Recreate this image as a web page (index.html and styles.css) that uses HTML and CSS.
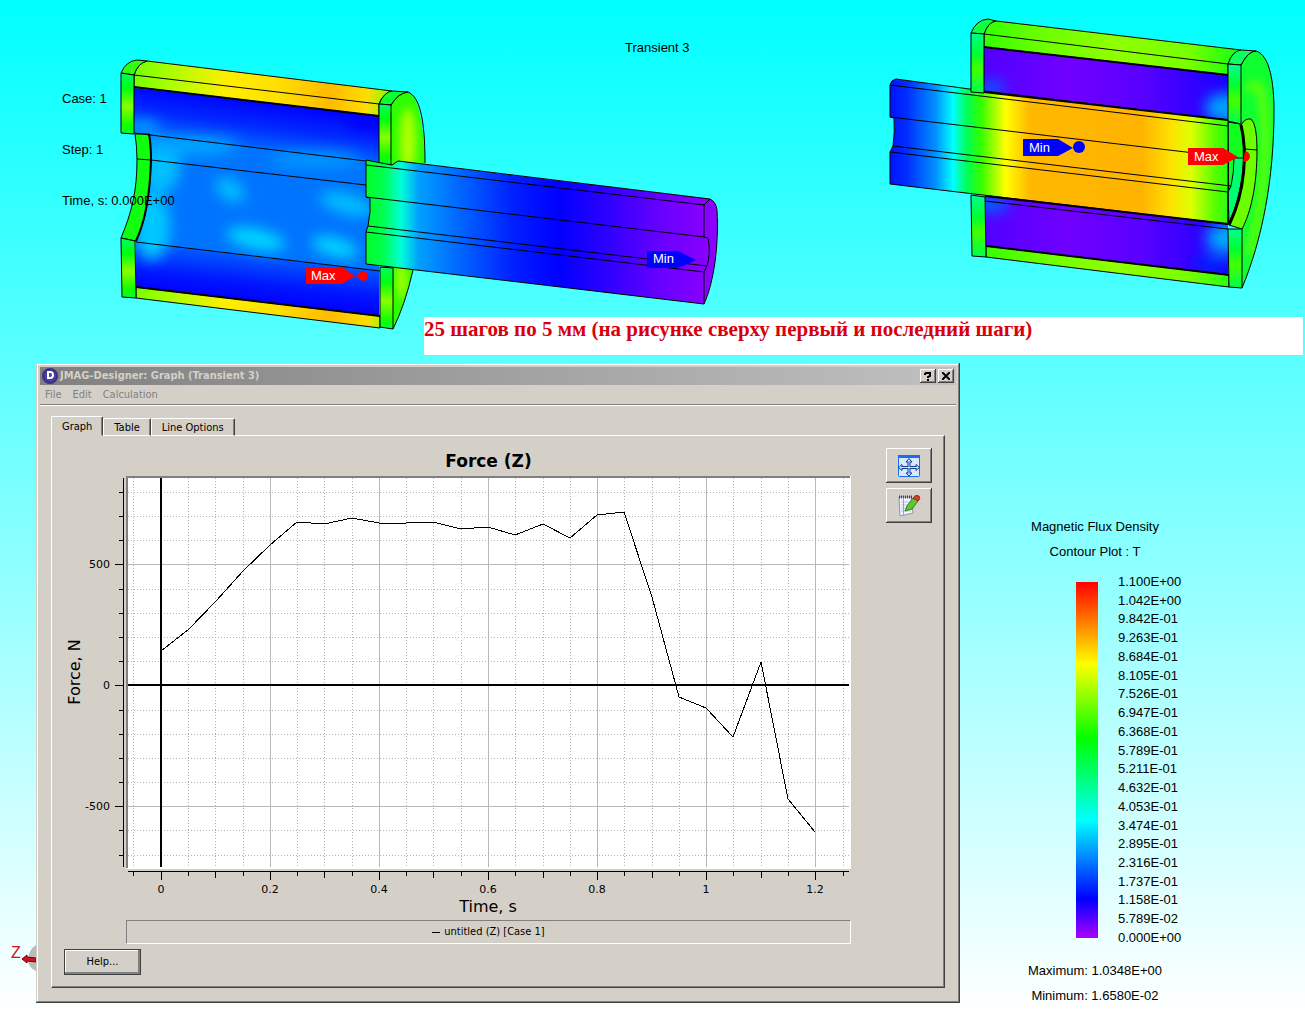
FILE: index.html
```
<!DOCTYPE html>
<html lang="en">
<head>
<meta charset="utf-8">
<title>JMAG-Designer: Graph (Transient 3)</title>
<meta name="viewport" content="width=device-width, initial-scale=1">
<link rel="stylesheet" href="styles.css">
</head>
<body>
<main class="viewport">
  <svg class="scene" viewBox="0 0 1305 317" role="img" aria-label="Flux density at the first and last steps">
    <defs>
      <linearGradient id="yokeYellow" gradientUnits="userSpaceOnUse" x1="134" y1="0" x2="392" y2="0">
        <stop offset="0" stop-color="#7f0"/><stop offset=".14" stop-color="#af0"/><stop offset=".36" stop-color="#fe0"/><stop offset=".55" stop-color="#ffe000"/><stop offset=".76" stop-color="#fb0"/><stop offset=".9" stop-color="#fd0"/><stop offset="1" stop-color="#7f0"/>
      </linearGradient>
      <linearGradient id="yokeGreen" gradientUnits="userSpaceOnUse" x1="984" y1="0" x2="1241" y2="0">
        <stop offset="0" stop-color="#3f0"/><stop offset=".2" stop-color="#6f0"/><stop offset=".5" stop-color="#90ff00"/><stop offset=".8" stop-color="#7f0"/><stop offset="1" stop-color="#1f1"/>
      </linearGradient>
      <linearGradient id="plate" x1="0" y1="0" x2="0" y2="1">
        <stop offset="0" stop-color="#00ff60"/><stop offset=".25" stop-color="#0f1"/><stop offset=".55" stop-color="#8f0"/><stop offset=".85" stop-color="#1f0"/><stop offset="1" stop-color="#00ff30"/>
      </linearGradient>
      <linearGradient id="plateCool" x1="0" y1="0" x2="0" y2="1">
        <stop offset="0" stop-color="#00ff90"/><stop offset=".35" stop-color="#00ff30"/><stop offset=".6" stop-color="#4f0"/><stop offset="1" stop-color="#00ff50"/>
      </linearGradient>
      <linearGradient id="coilTop" gradientUnits="userSpaceOnUse" x1="250" y1="98" x2="243" y2="150">
        <stop offset="0" stop-color="#00f"/><stop offset=".5" stop-color="#0028ff"/><stop offset="1" stop-color="#0070ff"/>
      </linearGradient>
      <linearGradient id="coilBottom" gradientUnits="userSpaceOnUse" x1="262" y1="255" x2="257" y2="302">
        <stop offset="0" stop-color="#0060ff"/><stop offset=".6" stop-color="#0018ff"/><stop offset="1" stop-color="#00f"/>
      </linearGradient>
      <linearGradient id="shaftFirst" gradientUnits="userSpaceOnUse" x1="366" y1="0" x2="717" y2="0">
        <stop offset="0" stop-color="#00ff28"/><stop offset=".05" stop-color="#00ff50"/><stop offset=".1" stop-color="#00ffd8"/><stop offset=".15" stop-color="#00a0ff"/><stop offset=".28" stop-color="#0060ff"/><stop offset=".42" stop-color="#0020ff"/><stop offset=".55" stop-color="#00f"/><stop offset=".68" stop-color="#2c00ff"/><stop offset=".84" stop-color="#6800ff"/><stop offset="1" stop-color="#9000ff"/>
      </linearGradient>
      <linearGradient id="shaftLast" gradientUnits="userSpaceOnUse" x1="890" y1="0" x2="1240" y2="0">
        <stop offset="0" stop-color="#0010ff"/><stop offset=".05" stop-color="#0030ff"/><stop offset=".13" stop-color="#0090ff"/><stop offset=".18" stop-color="#00ffff"/><stop offset=".22" stop-color="#0f5"/><stop offset=".26" stop-color="#3f0"/><stop offset=".33" stop-color="#ff0"/><stop offset=".4" stop-color="#ffb800"/><stop offset=".72" stop-color="#ffb400"/><stop offset=".8" stop-color="#ffe000"/><stop offset=".86" stop-color="#df0"/><stop offset=".93" stop-color="#5f0"/><stop offset="1" stop-color="#00ff20"/>
      </linearGradient>
      <linearGradient id="coilViolet" gradientUnits="userSpaceOnUse" x1="984" y1="0" x2="1228" y2="0">
        <stop offset="0" stop-color="#5000ff"/><stop offset=".35" stop-color="#7000ff"/><stop offset=".65" stop-color="#5800ff"/><stop offset="1" stop-color="#1800ff"/>
      </linearGradient>
      <filter id="soft" x="-50%" y="-50%" width="200%" height="200%"><feGaussianBlur stdDeviation="7"/></filter>
      <filter id="softer" x="-50%" y="-50%" width="200%" height="200%"><feGaussianBlur stdDeviation="4"/></filter>
      <clipPath id="boreClip"><path d="M134 88 379 116 379 316 136 287 136 241 Q150 200 151 160L149 134 134 133Z"/></clipPath>
      <clipPath id="capClip"><path d="M391 105Q398 93 408 92 422 96 425 163L425 270 413 270Q405 305 393 329Z"/></clipPath>
      <clipPath id="lastCoils"><path d="M984 47 1228 75V120L984 92ZM985 194 1228 222V275L986 246Z"/></clipPath>
      <clipPath id="lastCap"><path d="M1241 65Q1248 51 1256 51C1270 55 1274 84 1274 110C1274 180 1262 240 1242 288Z"/></clipPath>
    </defs>

    <g class="edges">
      <g clip-path="url(#boreClip)" stroke="none">
        <path fill="#0074ff" d="M130 80H385V320H130Z"/>
        <path fill="url(#coilTop)" d="M134 87 379 116V161L134 133Z"/>
        <path fill="url(#coilBottom)" d="M136 242 379 271V316L136 287Z"/>
        <g filter="url(#soft)" fill="#00c0ff">
          <ellipse cx="152" cy="226" rx="18" ry="34" fill="#00c8ff"/>
          <ellipse cx="160" cy="165" rx="20" ry="28"/>
          <ellipse cx="190" cy="146" rx="48" ry="9" fill="#00a8ff"/>
          <ellipse cx="230" cy="190" rx="16" ry="10" transform="rotate(35 230 190)"/>
          <ellipse cx="256" cy="239" rx="30" ry="10" fill="#00d8ff" transform="rotate(12 256 239)"/>
          <ellipse cx="347" cy="204" rx="28" ry="10" transform="rotate(15 347 204)"/>
          <ellipse cx="335" cy="247" rx="24" ry="9" fill="#00d8ff" transform="rotate(15 335 247)"/>
          <ellipse cx="315" cy="160" rx="46" ry="8" fill="#0098ff"/>
          <ellipse cx="142" cy="127" rx="18" ry="7" fill="#00a0ff"/>
          <ellipse cx="370" cy="120" rx="24" ry="10" fill="#00f"/>
        </g>
      </g>
      <path fill="url(#yokeYellow)" d="M134 75Q138 63 147 61L392 91Q382 95 379 104V116L134 87Z"/>
      <path fill="url(#yokeYellow)" d="M136 287 380 316V328L136 298Z"/>
      <path fill="#30ff10" d="M121 73Q126 61 137 60L147 61Q138 63 134 75Z"/>
      <path fill="url(#plate)" d="M121 73 134 75V134L121 133Z"/>
      <path fill="#10ff10" d="M135 134 149 134Q151 145 151 160C150 195 146 220 136 241L121 238C132 212 137 190 137 160Q137 146 135 134Z"/>
      <path fill="url(#plate)" d="M121 238 135 241 136 298 122 297Z"/>
      <path fill="none" d="M134 75 379 104M134 133 366 161M137 159 151 160 366 185M136 242 380 271"/>
      <path class="heavy" d="M134 87 379 116M136 287 380 316M149 134Q151 145 151 160C150 195 146 220 136 241"/>
      <g clip-path="url(#capClip)" stroke="none">
        <path fill="#2cff00" d="M388 88H428V332H388Z"/>
        <g filter="url(#softer)" fill="#b0ff00"><ellipse cx="408" cy="142" rx="8" ry="34"/><ellipse cx="402" cy="280" rx="5" ry="20"/></g>
      </g>
      <path fill="none" d="M391 105Q398 93 408 92C420 97 425 120 425 163M413 270Q405 305 393 329"/>
      <path fill="#10ff30" d="M379 104Q384 92 392 91L408 92Q398 93 391 105Z"/>
      <path fill="url(#plate)" d="M379 104 391 105V165L379 164Z"/>
      <path fill="url(#plate)" d="M380 267 393 268V329L380 327Z"/>
      <path fill="url(#shaftFirst)" d="M366 160 392 165 398 161 710 199Q716 202 717 210C719 245 714 282 704 304L366 264V232L368 226Q371 212 370 198L366 197Z"/>
      <path fill="none" d="M366 165 704 205 710 199M704 205V237L366 197M704 237 708 238Q711 252 707 266L704 272V304M368 226 707 266M366 232 704 272"/>
      <path stroke="none" fill="red" d="M306 267H342L355 276 342 284H306Z"/>
      <circle stroke="none" fill="red" cx="363" cy="276" r="5"/><path stroke="red" d="M354 276H358"/>
      <path stroke="none" fill="#00f" d="M647 251H678L696 260 678 268H647Z"/>
    </g>

    <g class="edges">
      <g clip-path="url(#lastCoils)" stroke="none">
        <path fill="url(#coilViolet)" d="M980 40H1232V280H980Z"/>
        <g filter="url(#soft)" fill="#0060ff">
          <ellipse cx="990" cy="88" rx="16" ry="7"/><ellipse cx="1225" cy="108" rx="20" ry="15" fill="#00a0ff"/>
          <ellipse cx="990" cy="204" rx="20" ry="9"/><ellipse cx="1226" cy="238" rx="20" ry="15" fill="#00a8ff"/>
          <ellipse cx="1212" cy="264" rx="18" ry="9" fill="#0020ff"/>
        </g>
      </g>
      <path fill="url(#yokeGreen)" d="M984 34Q988 22 996 21L1241 50Q1232 54 1228 64V75L984 47Z"/>
      <path fill="url(#yokeGreen)" d="M986 246 1229 275V287L986 257Z"/>
      <path fill="none" d="M984 34 1228 64M985 201 1228 229"/>
      <path class="heavy" d="M984 47 1228 75M986 246 1229 275"/>
      <g clip-path="url(#lastCap)" stroke="none">
        <path fill="#10ff30" d="M1238 45H1278V290H1238Z"/>
        <g filter="url(#softer)" fill="none" stroke="#70ff00" stroke-width="7"><path d="M1248 90Q1264 70 1265 130T1250 255"/></g>
      </g>
      <path fill="none" d="M1241 65Q1248 51 1256 51C1270 55 1274 84 1274 110C1274 180 1262 240 1242 288"/>
      <path fill="#6cff00" d="M1241 125Q1245 118 1251 119 1257 124 1257 150C1257 185 1251 212 1242 229L1229 225C1241 198 1245 180 1245 149Z"/>
      <path fill="#10ff20" d="M1228 122 1240 124Q1245 140 1244 155C1243 184 1238 206 1229 225Z"/>
      <path fill="url(#shaftLast)" d="M890 85Q891 80 896 79L984 91 1228 120V224L890 184V152L893 146Q895 132 894 118L890 117Z"/>
      <path fill="#00ff70" d="M1228 192 1231 186Q1234 173 1234 158L1244 158Q1242 196 1229 223Z"/>
      <path fill="none" d="M890 85 1228 126M890 117 1228 157M893 146 1231 186M890 152 1228 192V224M1245 149 1257 150"/>
      <path class="heavy" d="M984 92 1228 120M985 196 1228 224"/>
      <path class="heaviest" d="M1241 125C1247 150 1246 190 1229 225"/>
      <path fill="#10ff40" d="M971 33Q976 20 988 19L996 21Q988 22 984 34Z"/>
      <path fill="url(#plateCool)" d="M971 33 984 34V93L971 92Z"/>
      <path fill="url(#plateCool)" d="M971 195 985 197 986 257 972 256Z"/>
      <path fill="#10ff60" d="M1228 64Q1232 51 1241 50L1256 51Q1248 51 1241 65Z"/>
      <path fill="url(#plateCool)" d="M1228 64 1241 65V124L1228 121Z"/>
      <path fill="url(#plateCool)" d="M1228 229 1242 229V288L1229 287Z"/>
      <path stroke="none" fill="#00f" d="M1023 139H1058L1073 148 1058 156H1023Z"/>
      <circle stroke="none" fill="#00f" cx="1079" cy="147" r="6"/>
      <path stroke="none" fill="red" d="M1188 148H1223L1238 157 1223 165H1188ZM1245 151Q1250 152 1250 157 1249 162 1243 162Z"/>
    </g>

    <g class="tag-text">
      <text x="311" y="280">Max</text>
      <text x="653" y="263">Min</text>
      <text x="1029" y="152">Min</text>
      <text x="1194" y="161">Max</text>
    </g>
    <g class="scene-text">
      <text x="625" y="52">Transient 3</text>
      <text x="62" y="103">Case: 1</text>
      <text x="62" y="154">Step: 1</text>
      <text x="62" y="205">Time, s: 0.000E+00</text>
    </g>
  </svg>

  <p class="caption">25 шагов по 5 мм (на рисунке сверху первый и последний шаги)</p>

  <div class="workspace">
    <svg class="axis-mark" width="36" height="32" viewBox="0 0 36 32" role="img" aria-label="Z axis">
      <path fill="#bbb" d="M36 2V28Q29 25 28 18 28 7 36 2Z"/>
      <path fill="#d01020" stroke="#700" d="M22 16 27 12V14L36 15V19L27 18V20Z"/>
      <text x="11" y="15">Z</text>
    </svg>

    <section class="window" aria-labelledby="window-title">
      <header class="titlebar">
        <svg width="16" height="16" viewBox="0 0 16 16" aria-hidden="true">
          <circle cx="8" cy="8" r="8" fill="#3b2f86"/><circle cx="8" cy="8" r="6" fill="#4a3d9c"/>
          <path fill="none" stroke="#fff" stroke-width="2" d="M6 4H8Q11 4 11 7 11 10 8 10H6Z"/>
        </svg>
        <h1 id="window-title">JMAG-Designer: Graph (Transient 3)</h1>
        <button class="caption-button" type="button" aria-label="What's this"><svg width="8" height="9" viewBox="0 0 8 9"><path fill="none" stroke="#000" stroke-width="2" d="M1 3V2L2 1H6V4L4 5V6M4 7V9"/></svg></button>
        <button class="caption-button" type="button" aria-label="Close"><svg width="8" height="8" viewBox="0 0 8 8"><path stroke="#000" stroke-width="2" d="M0 0 8 8M8 0 0 8"/></svg></button>
      </header>
      <nav class="menubar">
        <button type="button">File</button>
        <button type="button">Edit</button>
        <button type="button">Calculation</button>
      </nav>
      <div class="window-body">
        <div class="tabs" role="tablist">
          <button type="button" role="tab" class="tab active" aria-selected="true">Graph</button>
          <button type="button" role="tab" class="tab" aria-selected="false">Table</button>
          <button type="button" role="tab" class="tab" aria-selected="false">Line Options</button>
        </div>
        <div class="panel" role="tabpanel">
          <div class="panel-row">
            <figure class="chart">
              <figcaption>Force (Z)</figcaption>
              <svg class="plot" viewBox="62 476 789 440" role="img" aria-label="Force in newtons against time in seconds">
                <path fill="#fff" d="M126 476H851V869H126Z"/>
                <path fill="#808080" d="M126 476H850V478H128V868H126Z"/>
                <g class="lines">
                  <path class="minor" d="M133.500 478V867M188.500 478V867M215.500 478V867M243.500 478V867M297.500 478V867M324.500 478V867M352.500 478V867M406.500 478V867M433.500 478V867M461.500 478V867M515.500 478V867M543.500 478V867M570.500 478V867M624.500 478V867M652.500 478V867M679.500 478V867M733.500 478V867M761.500 478V867M788.500 478V867M843.500 478V867"/>
                  <path class="minor" d="M128 492.500H849M128 516.500H849M128 540.500H849M128 589.500H849M128 613.500H849M128 637.500H849M128 661.500H849M128 710.500H849M128 734.500H849M128 758.500H849M128 782.500H849M128 830.500H849M128 855.500H849"/>
                  <path class="major" d="M270.500 478V867M379.500 478V867M488.500 478V867M597.500 478V867M706.500 478V867M815.500 478V867M128 564.500H849M128 806.500H849"/>
                  <path class="zero" d="M161 478V867M128 685H849"/>
                  <path class="tick" d="M123.500 478V867M128 871.500H849"/>
                  <path class="tick" d="M115 564.500H123M115 685.500H123M115 806.500H123M119 492.500H123M119 516.500H123M119 540.500H123M119 589.500H123M119 613.500H123M119 637.500H123M119 661.500H123M119 710.500H123M119 734.500H123M119 758.500H123M119 782.500H123M119 830.500H123M119 855.500H123"/>
                  <path class="tick" d="M161.500 872V880M270.500 872V880M379.500 872V880M488.500 872V880M597.500 872V880M706.500 872V880M815.500 872V880M215.500 872V878M324.500 872V878M433.500 872V878M543.500 872V878M652.500 872V878M761.500 872V878M133.500 872V876M188.500 872V876M243.500 872V876M297.500 872V876M352.500 872V876M406.500 872V876M461.500 872V876M515.500 872V876M570.500 872V876M624.500 872V876M679.500 872V876M733.500 872V876M788.500 872V876M843.500 872V876"/>
                  <polyline class="series" points="161,651 189,629 216,601 243,571 270,545 297,522 324,524 352,518 379,523 406,523 433,522 461,529 488,527 515,535 543,524 570,538 597,515 624,512 652,597 679,697 706,708 733,737 761,662 788,799 815,832"/>
                </g>
                <g class="tick-text" text-anchor="end"><text x="110" y="568">500</text><text x="110" y="689">0</text><text x="110" y="810">-500</text></g>
                <g class="tick-text" text-anchor="middle"><text x="161" y="893">0</text><text x="270" y="893">0.2</text><text x="379" y="893">0.4</text><text x="488" y="893">0.6</text><text x="597" y="893">0.8</text><text x="706" y="893">1</text><text x="815" y="893">1.2</text></g>
                <text class="axis-text" x="488" y="912" text-anchor="middle">Time, s</text>
                <text class="axis-text" text-anchor="middle" transform="translate(80 672) rotate(-90)">Force, N</text>
              </svg>
              <p class="series-key"><span class="key-line"></span>untitled (Z) [Case 1]</p>
            </figure>
            <div class="tools">
              <button class="raised" type="button" aria-label="Fit to window">
                <svg width="24" height="24" viewBox="0 0 24 24"><rect x="1.500" y="1.500" width="21" height="21" rx="1" fill="#d8e8ff" stroke="#1a6cf0"/><path fill="#1a6cf0" d="M1 1H23V4H1Z"/><path fill="none" stroke="#103c90" stroke-width="3" d="M12 6V21M4 13.500H20"/><path fill="#cfe4ff" stroke="#103c90" d="M12 4.500 15 8H9ZM12 22 9 19H15ZM1.500 13.500 5 10.500V16.500ZM22.500 13.500 19 10.500V16.500Z"/><path stroke="#cfe4ff" d="M12 7V20M4 13.500H20"/></svg>
              </button>
              <button class="raised" type="button" aria-label="Edit notes">
                <svg width="24" height="24" viewBox="0 0 24 24"><path fill="#f4f6fd" stroke="#8a93b5" d="M2 3 14 3 16 19 3 22Z"/><path stroke="#b8c4e4" d="M4 8H14M4 11H14M4 14H14M4 17H14"/><path stroke="#f08080" d="M6.500 5V21"/><path stroke="#444" stroke-width="3" stroke-dasharray="1 1" d="M2 3H15"/><path fill="#5cc832" stroke="#2c8018" d="M10 12 16 4 21 7 15 15 8 17Z"/><path fill="#d83c2c" stroke="#a02818" d="M16 4Q18 0 22 2 24 5 21 7Z"/></svg>
              </button>
            </div>
          </div>
          <button class="help" type="button">Help...</button>
        </div>
      </div>
    </section>

    <aside class="legend">
      <p>Magnetic Flux Density</p>
      <p>Contour Plot : T</p>
      <div class="scale">
        <div class="ramp"></div>
        <ol class="levels">
          <li>1.100E+00</li><li>1.042E+00</li><li>9.842E-01</li><li>9.263E-01</li><li>8.684E-01</li><li>8.105E-01</li><li>7.526E-01</li><li>6.947E-01</li><li>6.368E-01</li><li>5.789E-01</li><li>5.211E-01</li><li>4.632E-01</li><li>4.053E-01</li><li>3.474E-01</li><li>2.895E-01</li><li>2.316E-01</li><li>1.737E-01</li><li>1.158E-01</li><li>5.789E-02</li><li>0.000E+00</li>
        </ol>
      </div>
      <p>Maximum: 1.0348E+00</p>
      <p>Minimum: 1.6580E-02</p>
    </aside>
  </div>
</main>
</body>
</html>
```
FILE: styles.css
```
:root {
  --face: #d4d0c8;
  --shade: #808080;
  --dark: #404040;
  --ui: "DejaVu Sans Condensed", "DejaVu Sans", sans-serif;
  --ui-wide: "DejaVu Sans", sans-serif;
  --plain: "Liberation Sans", Arial, sans-serif;
}

* { box-sizing: border-box; }

body {
  margin: 0;
  min-height: 100vh;
  background: linear-gradient(#0ff, #fff);
  color: #000;
  font: 13px/14px var(--plain);
}

p, h1, ol, figure { margin: 0; padding: 0; }
ol { list-style: none; }

button {
  margin: 0;
  padding: 0;
  border: 0;
  background: var(--face);
  color: #000;
  font: 11px/14px var(--ui);
}

.scene {
  display: block;
  width: 100%;
  height: auto;
  overflow: visible;
}
.edges { stroke: #000; stroke-width: 1; }
.heavy { fill: none; stroke-width: 2; }
.heaviest { fill: none; stroke-width: 3; }
.tag-text { fill: #fff; font: 13px var(--plain); }
.scene-text { font: 13px var(--plain); }

.caption {
  margin: 0 2px 0 424px;
  height: 38px;
  background: #fff;
  color: #d8000c;
  font: bold 21px/24px "Liberation Serif", serif;
  white-space: nowrap;
}

.workspace { display: flex; align-items: flex-start; padding: 8px 0; }

.axis-mark { flex: none; align-self: flex-end; margin-bottom: 28px; }
.axis-mark text { fill: #d01020; font: 16px var(--plain); }

.window {
  flex: 1;
  min-width: 0;
  padding: 4px;
  background: var(--face);
  box-shadow: inset -1px -1px var(--dark), inset 1px 1px var(--face), inset -2px -2px var(--shade), inset 2px 2px #fff;
}

.titlebar {
  display: flex;
  align-items: center;
  gap: 2px;
  height: 18px;
  padding: 0 2px;
  background: linear-gradient(90deg, #808080, #c0c0c0);
}
.titlebar h1 {
  flex: 1;
  color: var(--face);
  font: bold 11px/18px var(--ui);
}
.caption-button {
  display: grid;
  place-items: center;
  width: 16px;
  height: 14px;
  box-shadow: inset -1px -1px var(--dark), inset 1px 1px #fff, inset -2px -2px var(--shade);
}

.menubar {
  display: flex;
  gap: 11px;
  height: 21px;
  padding: 0 5px;
  border-bottom: 1px solid #fff;
  box-shadow: inset 0 -1px var(--shade);
}
.menubar button { height: 20px; background: none; color: var(--shade); }

.window-body { padding: 10px 11px 11px; }

.tabs { display: flex; align-items: flex-end; height: 20px; }
.tab {
  height: 18px;
  padding: 2px 10px 0;
  border: 1px solid;
  border-color: #fff var(--dark) #fff #fff;
  border-radius: 2px 2px 0 0;
  box-shadow: inset -1px 0 var(--shade);
}
.tab.active { position: relative; height: 20px; border-bottom-color: var(--face); }

.panel {
  margin-top: -1px;
  padding: 12px 12px 12px 10px;
  border: 1px solid;
  border-color: #fff var(--dark) var(--dark) #fff;
  box-shadow: inset -1px -1px var(--shade);
}
.panel-row { display: flex; gap: 35px; }

.chart { flex: 1; min-width: 0; }
.chart figcaption {
  height: 28px;
  padding-left: 64px;
  font: bold 17px/26px var(--ui-wide);
  text-align: center;
}
.plot { display: block; width: 100%; height: auto; }
.lines { fill: none; shape-rendering: crispEdges; }
.minor { stroke: #b4b4b4; stroke-dasharray: 1 2; }
.major { stroke: #b8b8b8; }
.zero { stroke: #000; stroke-width: 2; }
.tick, .series { stroke: #000; }
.tick-text { font: 11px var(--ui-wide); }
.axis-text { font: 16px var(--ui-wide); }

.series-key {
  display: flex;
  align-items: center;
  justify-content: center;
  gap: 4px;
  height: 24px;
  margin: 4px 0 0 64px;
  border: 1px solid;
  border-color: var(--shade) #fff #fff var(--shade);
  font: 11px/14px var(--ui);
}
.key-line { width: 8px; height: 1px; background: #000; }

.tools { display: flex; flex-direction: column; gap: 5px; }
.raised {
  display: grid;
  place-items: center;
  width: 46px;
  height: 35px;
  box-shadow: inset -1px -1px var(--dark), inset 1px 1px #fff, inset -2px -2px var(--shade);
}
.help {
  display: block;
  width: 77px;
  height: 26px;
  margin: 5px 0 0 2px;
  border: 1px solid var(--dark);
  box-shadow: inset -2px -2px var(--shade), inset 1px 1px #fff;
}

.legend {
  display: flex;
  flex-direction: column;
  width: 345px;
  padding: 157px 75px 0 0;
  gap: 11px;
  text-align: center;
}
.scale {
  display: flex;
  align-items: center;
  gap: 20px;
  height: 370px;
  margin: 5px 0 8px 116px;
}
.ramp {
  width: 22px;
  height: 356px;
  background: linear-gradient(#f00, #ff0 23%, #0f0 44%, #0ff 67%, #00f 89%, #a0f);
}
.levels {
  display: flex;
  flex-direction: column;
  justify-content: space-between;
  height: 100%;
  text-align: left;
}
```
